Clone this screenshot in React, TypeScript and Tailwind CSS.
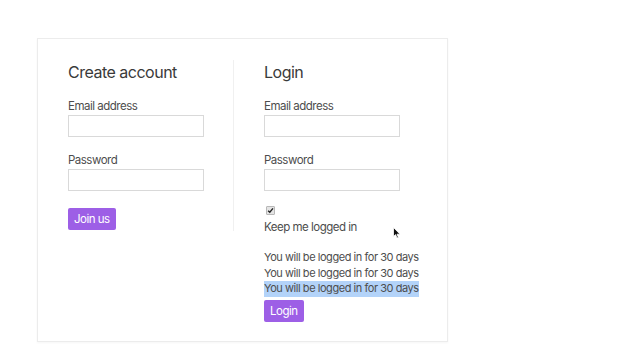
import React from "react";

const font = { fontFamily: "Inter, 'Liberation Sans', sans-serif" };

function Field({ label }: { label: string }) {
  return (
    <div className="flex flex-col">
      <label className="whitespace-nowrap text-[11.5px] leading-[16px] tracking-[-0.5px] text-[#4d4d4d]">{label}</label>
      <input className="mt-px h-[22px] w-[136px] border border-[#d9d9d9] bg-white outline-none" />
    </div>
  );
}

export default function App() {
  return (
    <div className="relative h-[360px] w-[640px] bg-white" style={font}>
      <div className="absolute left-[37px] top-[38px] h-[304px] w-[411px] border border-[#ececec] bg-white shadow-[0_1px_2px_rgba(0,0,0,0.04)]">
        <div className="flex items-start pl-[30px] pt-[21px]">
          <div className="flex w-[166px] flex-col border-r border-[#f0f0f0] pb-[1px]">
            <h2 className="whitespace-nowrap text-[16px] leading-[24px] tracking-[-0.5px] text-[#3a3a3a]">Create account</h2>
            <div className="mt-[14px]">
              <Field label="Email address" />
            </div>
            <div className="mt-[15px]">
              <Field label="Password" />
            </div>
            <div className="mt-[14px]">
              <button className="h-[22px] rounded-[2px] bg-[#9d5fe6] px-[6px] text-[11.5px] leading-[22px] tracking-[-0.5px] text-white">
                Join us
              </button>
            </div>
          </div>
          <div className="flex flex-col pl-[30px]">
            <h2 className="whitespace-nowrap text-[16px] leading-[24px] tracking-[-0.5px] text-[#3a3a3a]">Login</h2>
            <div className="mt-[14px]">
              <Field label="Email address" />
            </div>
            <div className="mt-[15px]">
              <Field label="Password" />
            </div>
            <div className="mt-[13px] flex h-[12px] items-center pl-[2px]">
              <span className="flex h-[9px] w-[9px] items-center justify-center rounded-[1px] border border-[#b8b8b8] bg-[#e4e4e4]">
                <svg width="7" height="7" viewBox="0 0 8 8">
                  <path d="M1.3 4.2 L3.2 6 L6.8 1.6" stroke="#222" strokeWidth="1.6" fill="none" />
                </svg>
              </span>
            </div>
            <div className="mt-[3px] whitespace-nowrap text-[11.5px] leading-[16px] tracking-[-0.5px] text-[#4d4d4d]">Keep me logged in</div>
            <div className="mt-[15px] flex flex-col whitespace-nowrap text-[11px] leading-[15.5px] tracking-[-0.45px] text-[#4d4d4d]">
              <span>You will be logged in for 30 days</span>
              <span>You will be logged in for 30 days</span>
              <span className="self-start bg-[#b3d3f9]">You will be logged in for 30 days</span>
            </div>
            <div>
              <button className="h-[22px] rounded-[2px] bg-[#9d5fe6] px-[6px] text-[11.5px] leading-[22px] tracking-[-0.5px] text-white">
                Login
              </button>
            </div>
          </div>
        </div>
      </div>
      <svg className="absolute left-[393px] top-[227px]" width="8" height="12" viewBox="0 0 8 12">
        <path d="M0.5 0.5 L0.5 9.5 L2.6 7.6 L4 11 L5.4 10.4 L4 7.2 L7 7.2 Z" fill="#111" stroke="#fff" strokeWidth="0.8" />
      </svg>
    </div>
  );
}
